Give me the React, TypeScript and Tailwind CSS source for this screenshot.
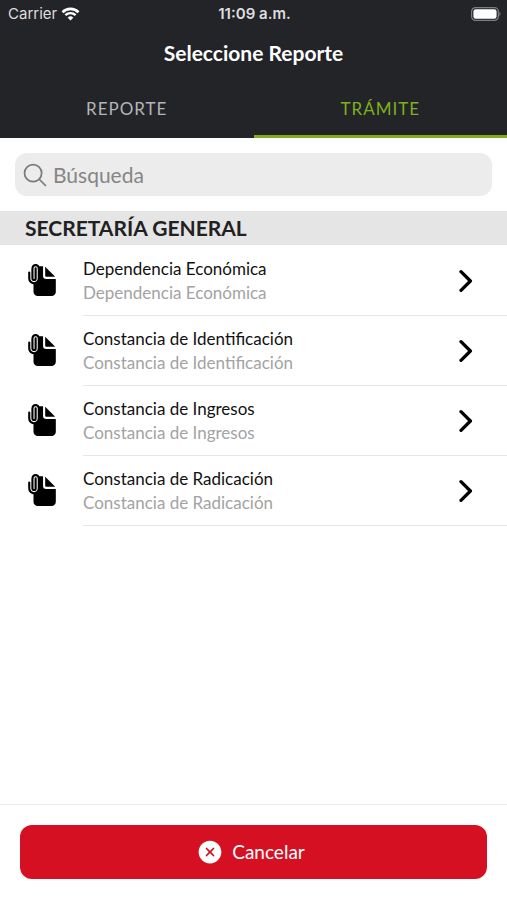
import React, { useState } from "react";
import {
  IoCloseCircle,
  IoDocumentAttach,
  IoSearchOutline,
} from "react-icons/io5";

const reports = [
  "Dependencia Económica",
  "Constancia de Identificación",
  "Constancia de Ingresos",
  "Constancia de Radicación",
];

const WifiIcon = () => (
  <svg width="19" height="14" viewBox="0 0 18 14" fill="none" aria-hidden="true">
    <path d="M1 5.2a11.4 11.4 0 0 1 16 0" stroke="white" strokeWidth="2.6" />
    <path d="M3.9 8.2a7.3 7.3 0 0 1 10.2 0" stroke="white" strokeWidth="2.4" />
    <path d="M9 13.6 6.2 10.7a4 4 0 0 1 5.6 0Z" fill="white" />
  </svg>
);

const BatteryIcon = () => (
  <svg width="30" height="14" viewBox="0 0 30 14" fill="none" aria-hidden="true">
    <rect x="0.6" y="0.6" width="26.8" height="12.8" rx="4" stroke="#7d7e81" strokeWidth="1.2" />
    <rect x="2.4" y="2.2" width="23.2" height="9.6" rx="2.4" fill="white" />
    <path d="M28.4 4.8c1.4.6 1.4 3.8 0 4.4Z" fill="#7d7e81" />
  </svg>
);

const ChevronIcon = () => (
  <svg width="14" height="24" viewBox="0 0 14 24" fill="none" aria-hidden="true">
    <path
      d="M2 2.7 11.4 12 2 21.3"
      stroke="currentColor"
      strokeWidth="3.3"
      strokeLinecap="round"
      strokeLinejoin="round"
    />
  </svg>
);

const StatusBar = () => (
  <div className="grid h-7 grid-cols-3 items-center pl-2 pr-1.5 font-['Inter',sans-serif] text-[15px] text-[#dededf]">
    <div className="flex items-center gap-1">
      Carrier
      <WifiIcon />
    </div>
    <div className="text-center font-semibold">11:09 a.m.</div>
    <div className="flex justify-end">
      <BatteryIcon />
    </div>
  </div>
);

const Tab = ({
  label,
  active,
  onClick,
}: {
  label: string;
  active: boolean;
  onClick: () => void;
}) => (
  <button
    type="button"
    role="tab"
    aria-selected={active}
    onClick={onClick}
    className={`flex-1 border-b-3 pt-1 text-[17px] tracking-[1px] ${
      active
        ? "border-[#7fb01c] text-[#7fb01c]"
        : "border-transparent text-[#b4b5b7]"
    }`}
  >
    {label}
  </button>
);

const ReportRow = ({ name }: { name: string }) => (
  <li>
    <button type="button" className="flex w-full items-stretch pl-[25px] text-left">
      <span className="flex w-[58px] items-center pb-0.5">
        <IoDocumentAttach size={34} />
      </span>
      <span className="flex h-[70px] flex-1 items-center justify-between border-b border-[#e6e6e6] pr-[34px]">
        <span className="flex flex-col text-[17px] leading-6">
          <span className="text-[#111111]">{name}</span>
          <span className="text-[#a3a3a3]">{name}</span>
        </span>
        <ChevronIcon />
      </span>
    </button>
  </li>
);

const App = () => {
  const [tab, setTab] = useState("tramite");
  return (
    <div className="flex min-h-screen flex-col bg-white font-['Lato',sans-serif] text-black">
      <header className="bg-[#232428]">
        <StatusBar />
        <h1 className="flex h-[50px] items-center justify-center text-[21px] font-bold text-white">
          Seleccione Reporte
        </h1>
        <div role="tablist" className="flex h-[60px]">
          <Tab
            label="REPORTE"
            active={tab === "reporte"}
            onClick={() => setTab("reporte")}
          />
          <Tab
            label="TRÁMITE"
            active={tab === "tramite"}
            onClick={() => setTab("tramite")}
          />
        </div>
      </header>

      <main className="flex-1">
        <div className="px-[15px] py-[15px]">
          <label className="flex h-[43px] items-center gap-1 rounded-xl bg-[#ececec] px-1.5 text-[#7b7b7b]">
            <IoSearchOutline size={28} className="shrink-0" />
            <input
              type="search"
              aria-label="Búsqueda"
              placeholder="Búsqueda"
              className="w-full bg-transparent text-[21px] outline-none placeholder:text-[#858585]"
            />
          </label>
        </div>
        <h2 className="flex h-[34px] items-center bg-[#e5e5e5] px-[25px] text-[21px] font-bold text-[#212121]">
          SECRETARÍA GENERAL
        </h2>
        <ul className="pt-px">
          {reports.map((name) => (
            <ReportRow key={name} name={name} />
          ))}
        </ul>
      </main>

      <footer className="border-t border-[#ebebeb] px-5 pb-[21px] pt-5">
        <button
          type="button"
          className="flex h-[54px] w-full items-center justify-center gap-2 rounded-xl bg-[#d51022] pr-1.5 text-[19px] text-white"
        >
          <IoCloseCircle size={28} />
          Cancelar
        </button>
      </footer>
    </div>
  );
};

export default App;
